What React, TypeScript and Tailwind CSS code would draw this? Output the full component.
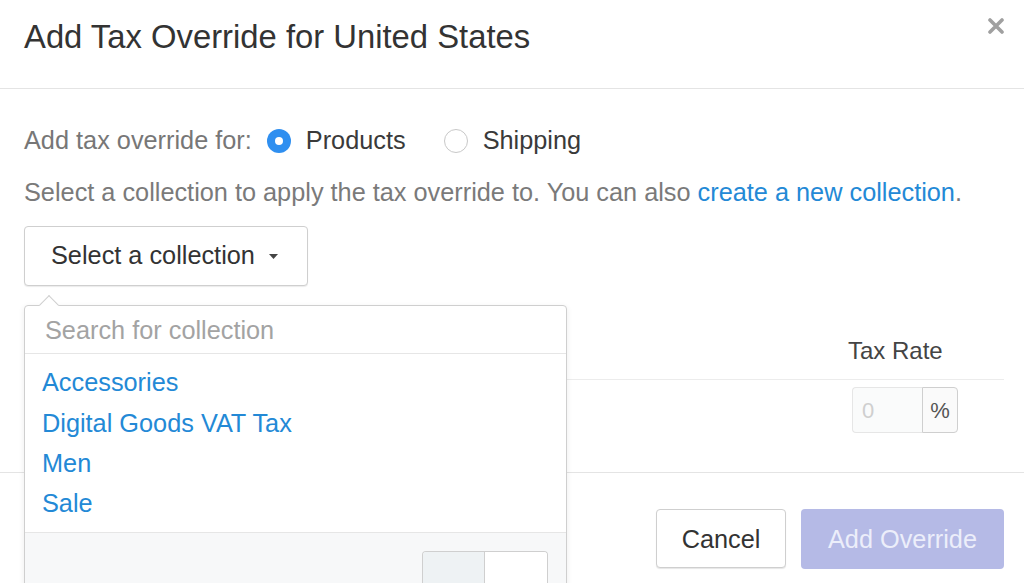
/** Add Tax Override modal — radio choice, collection picker popover, tax rate table. */

const collections = ["Accessories", "Digital Goods VAT Tax", "Men", "Sale"];

function Radio({ checked, label }: { checked?: boolean; label: string }) {
  return (
    <label className="flex items-center">
      {checked ? (
        <span className="flex h-6 w-6 items-center justify-center rounded-full bg-[#2f8ff0]">
          <span className="h-2 w-2 rounded-full bg-white" />
        </span>
      ) : (
        <span className="h-6 w-6 rounded-full border-[1.5px] border-[#c8c8c8] bg-white" />
      )}
      <span className="ml-[15px] text-[#3a3a3a]">{label}</span>
    </label>
  );
}

function CollectionPopover() {
  return (
    <div className="absolute left-0 top-[79px] w-[543px] rounded-t-[4px] border border-[#cfcfcf] bg-white shadow-[0_2px_6px_rgba(0,0,0,0.08)]">
      {/* pointer */}
      <span className="absolute left-[17px] top-[-8px] h-[14px] w-[14px] rotate-45 border-l border-t border-[#cfcfcf] bg-white" />
      <div className="relative flex h-[48px] items-center border-b border-[#e6e6e6] px-5 pt-[2px] text-[#a3a3a3]">
        Search for collection
      </div>
      <div className="pb-[7px] pt-[9px]">
        {collections.map((c) => (
          <div key={c} className="flex h-[40.4px] items-center px-[17px] text-[#2389d6]">
            {c}
          </div>
        ))}
      </div>
      <div className="flex h-[80px] justify-end border-t border-[#e6e6e6] bg-[#f7f8f9] pr-[18px] pt-[18px]">
        <div className="flex h-[40px] w-[126px] overflow-hidden rounded-t-[4px] border border-b-0 border-[#cfcfcf]">
          <span className="w-1/2 border-r border-[#cfcfcf] bg-[#eef2f4]" />
          <span className="w-1/2 bg-white" />
        </div>
      </div>
    </div>
  );
}

export default function App() {
  return (
    <div
      className="h-[583px] w-[1024px] overflow-hidden bg-white text-[25.3px]"
      style={{ fontFamily: '"Liberation Sans", Arial, sans-serif' }}
    >
      {/* Header */}
      <div className="flex h-[89px] items-start justify-between border-b border-[#e4e4e4] pl-6 pr-5 pt-[17px]">
        <h1 className="text-[32.8px] leading-[40px] text-[#333]">Add Tax Override for United States</h1>
        <svg width="16" height="16" viewBox="0 0 16 16" className="mt-[1px]">
          <path d="M2 2 L14 14 M14 2 L2 14" stroke="#a0a0a0" strokeWidth="3.6" strokeLinecap="round" />
        </svg>
      </div>

      {/* Body */}
      <div className="border-b border-[#e4e4e4] pl-6 pr-5 pt-[36px]">
        <div className="flex h-[30px] items-center pt-[2px]">
          <span className="text-[#777]">Add tax override for:</span>
          <div className="ml-[15px] flex items-center gap-[38px]">
            <Radio checked label="Products" />
            <Radio label="Shipping" />
          </div>
        </div>

        <p className="mt-[21px] pt-[1px] leading-[30px] text-[#7a7a7a]">
          Select a collection to apply the tax override to. You can also{" "}
          <span className="text-[#2389d6]">create a new collection</span>.
        </p>

        <div className="relative z-10 mt-[19px] w-[284px]">
          <button className="flex h-[60px] w-[284px] items-center rounded-[4px] border border-[#cfcfcf] bg-white pl-[26px] text-[#333] shadow-[0_1px_1px_rgba(0,0,0,0.08)]">
            Select a collection
            <svg width="9" height="5" viewBox="0 0 9 5" className="ml-[14px]">
              <path d="M0 0 H9 L4.5 5 Z" fill="#444" />
            </svg>
          </button>
          <CollectionPopover />
        </div>

        {/* Table behind popover */}
        <div className="mt-[34px]">
          <div className="flex h-[60px] items-center justify-end border-b border-[#ececec] pt-[2px]">
            <span className="w-[156px] text-[24px] text-[#444]">Tax Rate</span>
          </div>
          <div className="flex h-[92px] justify-end pt-[7px]">
            <div className="flex h-[46px] w-[156px] pl-1">
              <div className="flex w-[70px] items-center rounded-l-[4px] border border-r-0 border-[#e6e6e6] bg-[#fafbfb] pl-[9px] text-[22px] text-[#cfcfcf]">
                0
              </div>
              <div className="flex w-[36px] items-center justify-center rounded-r-[4px] border border-[#cfcfcf] bg-[#fafafa] text-[22px] text-[#555]">
                %
              </div>
            </div>
          </div>
        </div>
      </div>

      {/* Footer */}
      <div className="flex justify-end gap-[15px] pr-5 pt-[36px]">
        <button className="h-[59px] w-[130px] rounded-[4px] border border-[#cfcfcf] bg-white pt-[2px] text-[#333] shadow-[0_1px_1px_rgba(0,0,0,0.1)]">
          Cancel
        </button>
        <button className="h-[60px] w-[203px] rounded-[4px] bg-[#b5bae6] pt-[2px] text-[#eceefa]">Add Override</button>
      </div>
    </div>
  );
}
